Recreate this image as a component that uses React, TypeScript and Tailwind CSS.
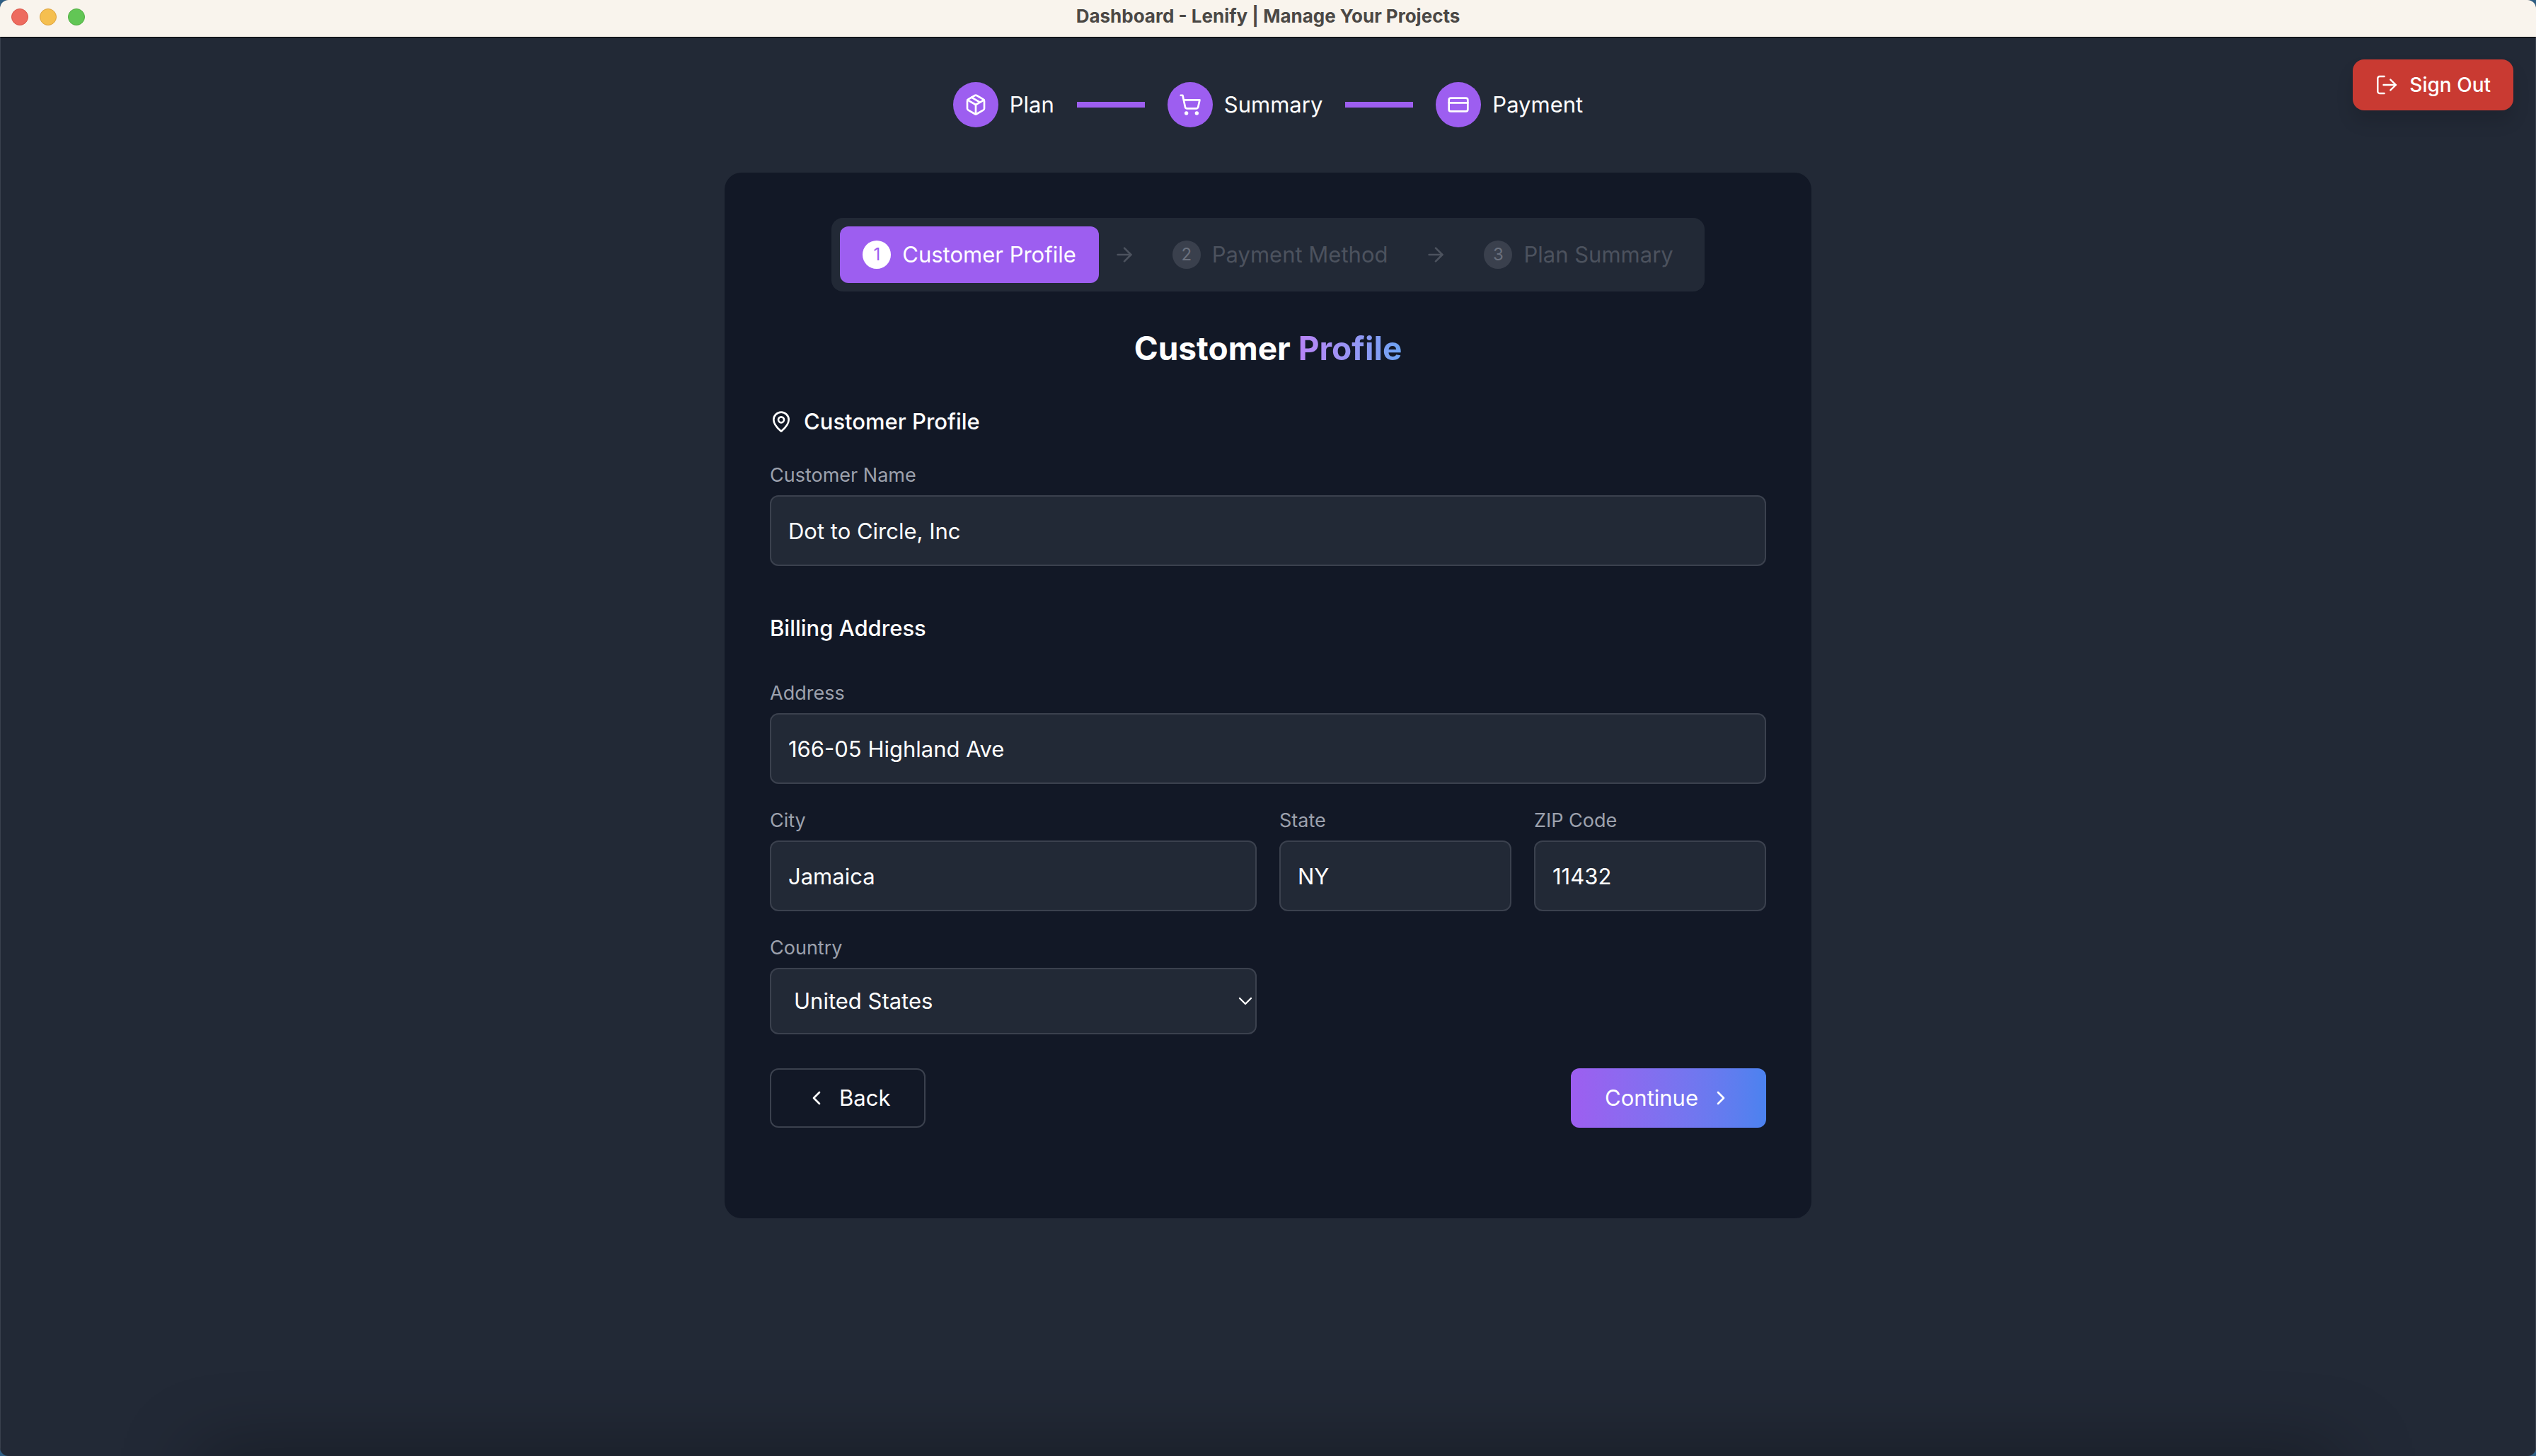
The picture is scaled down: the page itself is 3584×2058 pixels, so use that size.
import { useState } from "react";
import type { ReactNode } from "react";
import {
  ArrowRight,
  ChevronDown,
  ChevronLeft,
  ChevronRight,
  CreditCard,
  MapPin,
  Package,
  ShoppingCart,
} from "lucide-react";

const checkoutSteps = [
  { label: "Plan", icon: Package },
  { label: "Summary", icon: ShoppingCart },
  { label: "Payment", icon: CreditCard },
];

const profileSteps = ["Customer Profile", "Payment Method", "Plan Summary"];

function TitleBar() {
  return (
    <header className="relative flex h-[52px] shrink-0 items-center justify-center bg-[#f9f4ed]">
      <div className="absolute top-3 left-4 flex gap-4">
        <span className="size-6 rounded-full border border-[#d9574c] bg-[#ed6b5f]" />
        <span className="size-6 rounded-full border border-[#dba23f] bg-[#f5bf4f]" />
        <span className="size-6 rounded-full border border-[#51ad42] bg-[#62c655]" />
      </div>
      <h1 className="pb-1.5 text-[26px] leading-9 font-bold text-[#4b4845]">
        Dashboard - Lenify | Manage Your Projects
      </h1>
    </header>
  );
}

function SignOutIcon() {
  return (
    <svg className="size-8" viewBox="0 0 32 32" fill="none" stroke="currentColor" strokeWidth="2.4" strokeLinecap="round" strokeLinejoin="round">
      <path d="M12.6 4H6a2.7 2.7 0 0 0-2.7 2.7v18.6A2.7 2.7 0 0 0 6 28h6.6" />
      <path d="M11.5 16H29M21.3 8.6 29 16l-7.7 7.4" />
    </svg>
  );
}

function CheckoutSteps() {
  return (
    <ol className="flex items-center justify-center gap-8">
      {checkoutSteps.map(({ label, icon: Icon }, i) => (
        <li key={label} className="flex items-center gap-8">
          {i > 0 && <span className="h-2 w-24 bg-[#9d5ef0]" />}
          <span className="flex items-center gap-4">
            <span className="flex size-16 items-center justify-center rounded-full bg-[#9d5ef0]">
              <Icon className="size-8" />
            </span>
            <span className="text-[31px] leading-12">{label}</span>
          </span>
        </li>
      ))}
    </ol>
  );
}

function ProfileSteps() {
  return (
    <ol className="mx-auto flex w-fit items-center rounded-2xl bg-[#222936] p-3">
      {profileSteps.map((label, i) => (
        <li key={label} className="flex items-center">
          {i > 0 && <ArrowRight className="mx-5 size-8 text-[#4c525e]" />}
          <button
            type="button"
            disabled={i > 0}
            className="group flex h-20 items-center gap-4 rounded-xl bg-[#9d5ef0] px-8 text-[31px] leading-12 disabled:bg-transparent disabled:text-[#4c525e]"
          >
            <span className="flex size-10 items-center justify-center rounded-full bg-white text-2xl text-[#9d5ef0] group-disabled:bg-[#3a404d] group-disabled:text-[#6b717e]">
              {i + 1}
            </span>
            {label}
          </button>
        </li>
      ))}
    </ol>
  );
}

function Field({ id, label, className, children }: { id: string; label: string; className?: string; children: ReactNode }) {
  return (
    <div className={className}>
      <label htmlFor={id} className="mb-2 block text-[27px] leading-10 text-[#9ca1ad]">
        {label}
      </label>
      {children}
    </div>
  );
}

const inputClass =
  "block h-[100px] w-full rounded-xl border-2 border-[#3b414e] bg-[#222936] px-6 text-[31px] text-white outline-none focus:border-[#9d5ef0]";

export default function App() {
  const [form, setForm] = useState({
    name: "Dot to Circle, Inc",
    address: "166-05 Highland Ave",
    city: "Jamaica",
    state: "NY",
    zip: "11432",
    country: "United States",
  });

  const bind = (key: keyof typeof form) => ({
    id: key,
    value: form[key],
    onChange: (e: { target: { value: string } }) => setForm({ ...form, [key]: e.target.value }),
  });

  return (
    <div className="min-h-screen bg-[#2f5f85] font-['Inter',sans-serif]">
      <div className="flex min-h-screen flex-col overflow-hidden rounded-[12px] bg-[#222936] text-white">
        <TitleBar />
        <div className="relative flex-1 border-x border-t border-x-[#3a404d] border-t-black">
          <button
            type="button"
            className="absolute top-[31px] right-[31px] flex h-[72px] items-center gap-4 rounded-2xl bg-[#c93a32] px-8 text-[28px] font-medium shadow-[0_16px_24px_rgba(0,0,0,0.12)]"
          >
            <SignOutIcon />
            Sign Out
          </button>

          <main className="mx-auto max-w-[1536px] pt-[63px]">
            <CheckoutSteps />

            <section className="mt-16 rounded-3xl bg-[#121826] px-16 pt-16 pb-32">
              <ProfileSteps />

              <h2 className="mt-12 text-center text-[46px] leading-16 font-bold">
                Customer{" "}
                <span className="bg-gradient-to-r from-[#b884f6] to-[#6ca4f4] bg-clip-text text-transparent">Profile</span>
              </h2>

              <form className="mt-12" onSubmit={(e) => e.preventDefault()}>
                <h3 className="flex items-center gap-4 text-[31px] leading-12 font-medium">
                  <MapPin className="size-8" />
                  Customer Profile
                </h3>
                <Field id="name" label="Customer Name" className="mt-8">
                  <input type="text" className={inputClass} {...bind("name")} />
                </Field>

                <h3 className="mt-16 text-[31px] leading-12 font-medium">Billing Address</h3>
                <Field id="address" label="Address" className="mt-12">
                  <input type="text" className={inputClass} {...bind("address")} />
                </Field>

                <div className="mt-8 grid grid-cols-4 gap-8">
                  <Field id="city" label="City" className="col-span-2">
                    <input type="text" className={inputClass} {...bind("city")} />
                  </Field>
                  <Field id="state" label="State">
                    <input type="text" className={inputClass} {...bind("state")} />
                  </Field>
                  <Field id="zip" label="ZIP Code">
                    <input type="text" className={inputClass} {...bind("zip")} />
                  </Field>
                  <Field id="country" label="Country" className="col-span-2">
                    <div className="relative">
                      <select
                        className="block h-[94px] w-full appearance-none rounded-xl border-2 border-[#3b414e] bg-[#222936] px-8 text-[31px] text-white outline-none"
                        {...bind("country")}
                      >
                        <option>United States</option>
                        <option>Canada</option>
                      </select>
                      <ChevronDown strokeWidth={1.75} className="pointer-events-none absolute inset-y-0 right-0 my-auto size-8" />
                    </div>
                  </Field>
                </div>

                <div className="mt-12 flex items-center justify-between">
                  <button type="button" className="flex h-[84px] items-center gap-4 rounded-xl border-2 border-[#3b414e] px-12 text-[31px]">
                    <ChevronLeft className="size-8" />
                    Back
                  </button>
                  <button
                    type="submit"
                    className="flex h-[84px] items-center gap-4 rounded-xl bg-gradient-to-r from-[#9d5ef0] to-[#4b82ef] px-12 text-[31px]"
                  >
                    Continue
                    <ChevronRight className="size-8" />
                  </button>
                </div>
              </form>
            </section>
          </main>

          {/* soft shade rising from below the window's bottom edge */}
          <div className="pointer-events-none absolute inset-x-[280px] top-full h-20 shadow-[0_0_110px_rgba(0,0,0,0.4)]" />
        </div>
      </div>
    </div>
  );
}
